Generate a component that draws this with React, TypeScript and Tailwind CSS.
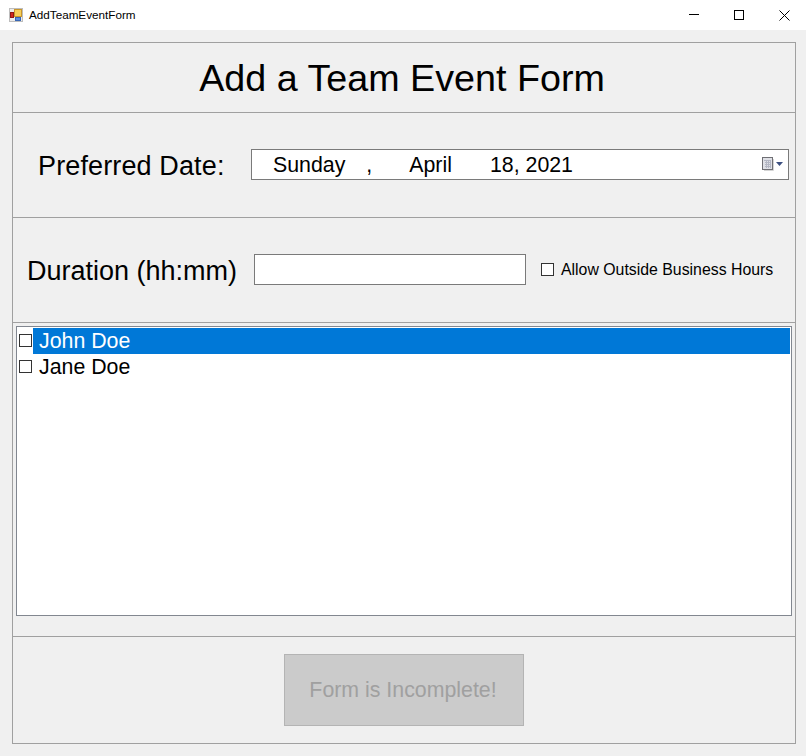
function AppIcon() {
  return (
    <svg width="14" height="14" viewBox="0 0 14 14" className="shrink-0">
      <rect x="0.5" y="0.5" width="13" height="13" fill="#ececec" stroke="#bdbdbd" />
      <rect x="5.5" y="1.5" width="7" height="7" fill="#f7cf58" stroke="#c8962c" />
      <rect x="1.5" y="4.5" width="3" height="5" fill="#d0261f" stroke="#8e1915" />
      <rect x="6.5" y="9.5" width="5" height="3" fill="#5b8fe0" stroke="#3866b4" />
    </svg>
  );
}

function CalendarIcon() {
  return (
    <div className="flex items-center gap-[2px]">
      <svg width="12" height="14" viewBox="0 0 12 14">
        <path d="M11.5 2v11.5H2" stroke="#d4d4d4" fill="none" />
        <rect x="0.5" y="0.5" width="10" height="12" fill="#dfe0e6" stroke="#6f6f74" />
        <path d="M2 3.5h7M3 5.5h6M3 7.5h6M3 9.5h6M4.5 4v7M6.5 4v7M8.5 4v7" stroke="#b4b7c4" strokeWidth="1" fill="none" />
      </svg>
      <svg width="7" height="4" viewBox="0 0 7 4">
        <path d="M0 0h7L3.5 4z" fill="#3c4f80" />
      </svg>
    </div>
  );
}

function Box({ className }: { className: string }) {
  return <span className={`block shrink-0 border border-[#333] bg-white ${className}`} />;
}

export default function App() {
  return (
    <div className="h-[756px] w-[806px] overflow-hidden bg-[#f0f0f0] text-black [font-family:'Liberation_Sans',Arial,sans-serif]">
      {/* title bar */}
      <div className="flex h-[30px] items-center bg-white pl-[9px] pr-[16px]">
        <AppIcon />
        <span className="ml-[6px] text-[11.7px]">AddTeamEventForm</span>
        <div className="ml-auto flex items-center">
          <svg width="10" height="10" viewBox="0 0 10 10"><path d="M0 4.5h10" stroke="#000" /></svg>
          <svg width="10" height="10" viewBox="0 0 10 10" className="ml-[35px]"><rect x="0.5" y="0.5" width="9" height="9" fill="none" stroke="#000" /></svg>
          <svg width="11" height="11" viewBox="0 0 11 11" className="ml-[35px]"><path d="M0.5 0.5l10 10M10.5 0.5l-10 10" stroke="#000" fill="none" /></svg>
        </div>
      </div>

      {/* table layout panel */}
      <div className="ml-[12px] mt-[12px] flex h-[702px] w-[784px] flex-col border border-[#a0a0a0]">
        <div className="flex h-[70px] items-center justify-center border-b border-[#a0a0a0] pr-[4px] pt-[2px] text-[37.7px]">
          Add a Team Event Form
        </div>

        <div className="flex h-[105px] items-center border-b border-[#a0a0a0]">
          <span className="ml-[25px] mt-[2px] w-[213px] text-[27px] tracking-[0.13px]">Preferred Date:</span>
          <div className="mb-[2px] flex h-[31px] w-[538px] items-center justify-between border border-[#7a7a7a] bg-white pl-[21px] pr-[5px] text-[21.33px]">
            <span className="whitespace-pre pt-[3px]">Sunday<span className="ml-[21px]">,</span><span className="ml-[37px]">April</span><span className="ml-[38px]">18, 2021</span></span>
            <CalendarIcon />
          </div>
        </div>

        <div className="flex h-[105px] items-center border-b border-[#a0a0a0]">
          <span className="ml-[14px] mt-[2px] w-[227px] text-[27px]">Duration (hh:mm)</span>
          <div className="mb-[2px] h-[31px] w-[272px] border border-[#7a7a7a] bg-white" />
          <Box className="mb-[2px] ml-[15px] h-[13px] w-[13px]" />
          <span className="ml-[7px] text-[15.85px]">Allow Outside Business Hours</span>
        </div>

        <div className="h-[314px] border-b border-[#a0a0a0] px-[3px] pt-[3px]">
          <div className="h-[290px] w-[776px] border border-[#828790] bg-white pl-[2px] pr-[1px] pt-[1px] text-[21.33px]">
            <div className="flex h-[26px] items-center">
              <Box className="mb-[2px] h-[13px] w-[13px]" />
              <span className="ml-px flex h-full flex-1 items-center bg-[#0078d7] pl-[6px] pt-[2px] text-white">John Doe</span>
            </div>
            <div className="flex h-[26px] items-center">
              <Box className="mb-[2px] h-[13px] w-[13px]" />
              <span className="ml-px pl-[6px] pt-[2px]">Jane Doe</span>
            </div>
          </div>
        </div>

        <div className="flex flex-1 items-center justify-center">
          <div className="flex h-[72px] w-[240px] items-center justify-center border border-[#b4b4b4] bg-[#cbcbcb] pr-[2px] pt-[2px] text-[21.33px] text-[#a0a0a0]">
            Form is Incomplete!
          </div>
        </div>
      </div>
    </div>
  );
}
